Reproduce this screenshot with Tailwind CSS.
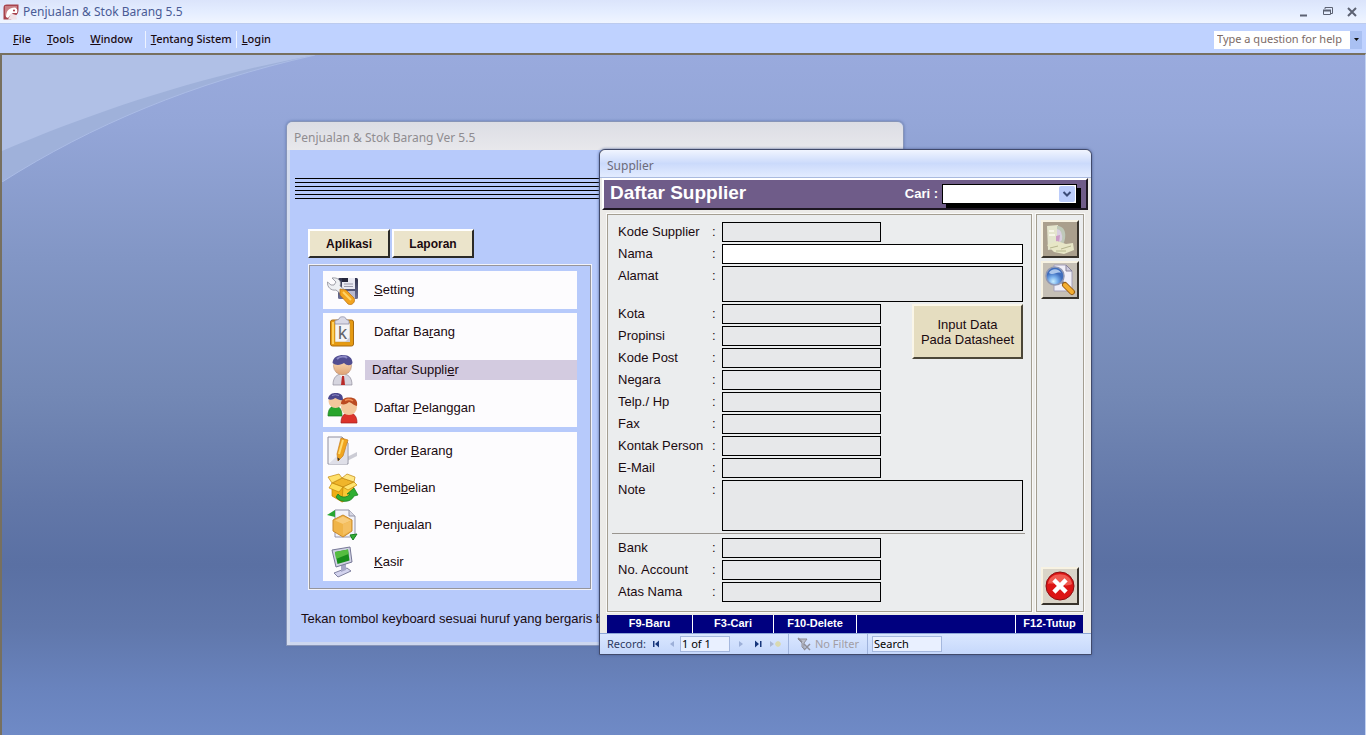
<!DOCTYPE html>
<html lang="id">
<head>
    <meta charset="UTF-8">
    <meta name="viewport" content="width=device-width, initial-scale=1.0">
    <title>Penjualan &amp; Stok Barang 5.5</title>
    <script src="https://cdn.jsdelivr.net/npm/@tailwindcss/browser@4"></script>
</head>
<body class="h-screen flex flex-col overflow-hidden bg-[#bfd2ff] font-['Noto_Sans',sans-serif] text-[#1a0a10]">

    <!-- Title bar -->
    <header class="h-6 shrink-0 flex items-center pl-[3px] pr-2 bg-linear-to-b from-[#dbe4fb] via-[#e4edff] to-[#f0f5ff] border-b border-[#bccbee]">
        <svg class="size-4" viewBox="0 0 16 16">
            <path d="M4 0.5H15.5V6C15.500 9 14 11 12 12L8 15.500H0.5V4C0.5 1.500 1.500 0.500 4 0.500Z" fill="#a8434d"/>
            <path d="M2 2H14V4L6 6 2 13Z" fill="#c98086"/>
            <path d="M3 13C3 7 6 3.500 12 3.500 14 4 15 6 14 9L10 9 8.500 10 7 11.500 5 14Z" fill="#fff"/>
            <circle cx="11" cy="6.500" r="1" fill="#a8343f"/>
            <path d="M8 9.500L5 15.500H14L13 11Z" fill="#f0e2e6"/>
        </svg>
        <h1 class="ml-1 text-[12px] text-[#4a5b95]">Penjualan &amp; Stok Barang 5.5</h1>
        <div class="ml-auto flex items-center gap-3">
            <button aria-label="Minimize" class="size-3">
                <svg class="size-3" viewBox="0 0 12 12"><path d="M2 9.500H9" stroke="#5c6273" stroke-width="2"/></svg>
            </button>
            <button aria-label="Restore" class="size-3">
                <svg class="size-3" viewBox="0 0 12 12" fill="none" stroke="#5c6273"><path d="M3 3V1.500H10.500V7.500H9"/><path d="M1.500 4.500H8.500V8.500H1.500Z"/><path d="M1 4.500H9" stroke-width="2"/></svg>
            </button>
            <button aria-label="Close" class="size-3">
                <svg class="size-3" viewBox="0 0 12 12"><path d="M2 2L10 10M10 2L2 10" stroke="#5c6273" stroke-width="2"/></svg>
            </button>
        </div>
    </header>

    <!-- Menu bar -->
    <nav class="h-[29px] shrink-0 flex items-center pt-0.5 pl-[13px] pr-1 text-[11px] font-medium bg-[#bfd2ff]">
        <button><u>F</u>ile</button>
        <button class="ml-4"><u>T</u>ools</button>
        <button class="ml-4"><u>W</u>indow</button>
        <button class="ml-3 pl-[5px] border-l border-[#eef3ff]"><u>T</u>entang Sistem</button>
        <button class="ml-1 pl-[5px] border-l border-[#eef3ff]"><u>L</u>ogin</button>
        <div class="ml-auto flex h-[18px] w-[148px]">
            <input type="text" aria-label="Help" placeholder="Type a question for help" class="flex-1 min-w-0 bg-white pl-[3px] text-[11px] font-normal placeholder:text-[#7b6a66]">
            <button aria-label="Help list" class="w-3 flex items-center justify-center bg-[#a9c0f2]">
                <svg class="w-[5px] h-[3px]" viewBox="0 0 5 3"><path d="M0 0H5L2.500 3Z" fill="#111"/></svg>
            </button>
        </div>
    </nav>

    <main class="relative flex-1 border-l-2 border-t-2 border-t-[#77705f] border-l-[#77705f] border-r border-r-[#c3d3f3] bg-[linear-gradient(#99aadd_0%,#94a6d8_10%,#8296c5_30%,#7388b5_50%,#6277a8_66%,#5a70a3_75%,#6077ab_84%,#6983bd_93%,#6f8ac6_100%)]">
        <svg class="absolute left-0 top-0 w-[313px] h-[127px]" viewBox="0 0 313 127">
            <path d="M0 0H313C190 28 90 70 0 127Z" fill="#9fb1da"/>
            <path d="M0 0H313C190 23 90 58 0 96Z" fill="#b0c0e6"/>
            <path d="M313 0C190 28 90 70 0 127" fill="none" stroke="#abbce6"/>
        </svg>

        <!-- Main menu window -->
        <section class="absolute left-[284px] top-[66px] w-[618px] pb-[17px] rounded-t-md border border-[#8795b8] bg-[#b7cafb] font-['Liberation_Sans',sans-serif] shadow-[inset_3px_0_0_#d3dcf0,inset_0_-3px_0_#cdd7ef,0_0_3px_#5f76ae]">
            <h2 class="h-7 flex items-center rounded-t-md pl-[7px] pt-1 bg-linear-to-b from-[#dcdde4] to-[#e8e8ec] font-['Noto_Sans',sans-serif] text-[12px] text-[#8f8c90]">Penjualan &amp; Stok Barang Ver 5.5</h2>
            <div class="mx-2 mt-7 flex flex-col gap-[3px]">
                <hr class="border-black"><hr class="border-black"><hr class="border-black"><hr class="border-black"><hr class="border-black"><hr class="border-black">
            </div>
            <div class="mt-[30px] ml-[21px] flex gap-0.5 text-[12px] font-bold">
                <button class="w-[82px] h-[29px] bg-[#ebe4cb] border-2 border-t-white border-l-white border-r-[#2b2a26] border-b-[#2b2a26]">Aplikasi</button>
                <button class="w-[82px] h-[29px] bg-[#ebe4cb] border-2 border-t-white border-l-white border-r-[#2b2a26] border-b-[#2b2a26]">Laporan</button>
            </div>
            <div class="mt-[7px] ml-[22px] w-[282px] px-[13px] pt-[5px] pb-[7px] border border-[#96959b] outline outline-[#f2f3fa] flex flex-col gap-1 text-[13px]">
                <div class="bg-[#fdfcfe]">
                    <button class="w-full h-[38px] flex items-center pl-1 text-left">
                        <svg class="size-8 shrink-0" viewBox="0 0 32 32">
                            <defs><linearGradient id="disk" x2="0" y2="1"><stop stop-color="#30324c"/><stop offset="1" stop-color="#6d7198"/></linearGradient></defs>
                            <rect x="11" y="4" width="20" height="21" rx="1.500" fill="url(#disk)"/>
                            <path d="M15 4H28V15H15Z" fill="#e9e9f3"/><path d="M15 4H21V8H15Z" fill="#25263b"/><path d="M17 12.500H26M17 10H26" stroke="#9999aa"/>
                            <path d="M18 17H28V25H18Z" fill="#b8b9d0"/>
                            <path d="M5 4L9 8 7 11 4 11 0.500 8C0 13 4 17 9 16L15 21 19 17 13 12C15 7 11 3 5 4Z" fill="#eef0f3" stroke="#8a8c96" stroke-width=".8"/>
                            <path d="M13 15L19 16 27 24C29 28 25 32 21 30L13 21Z" fill="#f2a41e" stroke="#b96f10" stroke-width=".7"/><path d="M16 18L24 26" stroke="#ffd368" stroke-width="2"/>
                        </svg>
                        <span class="ml-2.5 flex-1 h-5 leading-5 px-[5px]"><u>S</u>etting</span>
                    </button>
                </div>
                <div class="bg-[#fdfcfe]">
                    <button class="w-full h-[38px] flex items-center pl-1 text-left">
                        <svg class="size-8 shrink-0" viewBox="0 0 32 32">
                            <rect x="3.500" y="4" width="23" height="26" rx="2" fill="#e69a12" stroke="#a76a12"/><path d="M5 6H7V28H5Z" fill="#ffd05b"/>
                            <path d="M8 7H23V26H8Z" fill="#f4f4f6" stroke="#bf8c33" stroke-width=".5"/><path d="M23 26L18 26 23 21Z" fill="#cbcbd4"/>
                            <path d="M8 8V5C8 4 12 4 12 3 12 0 19 0 19 3 19 4 22 4 22 5V8Z" fill="#d9d9e6" stroke="#8f90a6" stroke-width=".8"/>
                            <text x="11" y="23" font-family="Liberation Sans, sans-serif" font-size="18" fill="#65656a">k</text>
                        </svg>
                        <span class="ml-2.5 flex-1 h-5 leading-5 px-[5px]">Daftar Ba<u>r</u>ang</span>
                    </button>
                    <button class="w-full h-[38px] flex items-center pl-1 text-left">
                        <svg class="size-8 shrink-0" viewBox="0 0 32 32">
                            <defs><linearGradient id="skin" x2="0" y2="1"><stop stop-color="#ffe5c5"/><stop offset="1" stop-color="#dda273"/></linearGradient></defs>
                            <path d="M6 31C6 23 10 20 15.500 20S25 23 25 31Z" fill="#d6d5df" stroke="#908e9c" stroke-width=".7"/><path d="M12 20L15.500 24 19 20Z" fill="#fff"/>
                            <path d="M15 22H17L18 31H14Z" fill="#b82a28"/>
                            <ellipse cx="15.500" cy="12" rx="9" ry="9" fill="url(#skin)" stroke="#ab7f62" stroke-width=".5"/>
                            <path d="M5.500 9C6 3 11 1 16 1 22 1 25.500 4 25.500 9 24 12 20 12 17 9 14 11 9 12 5.500 9Z" fill="#514d91"/><path d="M10 5C13 2 18 2 20 4" stroke="#8d89c6" stroke-width="2" fill="none"/>
                        </svg>
                        <span class="ml-1.5 flex-1 h-5 leading-5 pl-[7px] bg-[#d3cbe0]">Daftar Suppli<u>e</u>r</span>
                    </button>
                    <button class="w-full h-[38px] flex items-center pl-1 text-left">
                        <svg class="size-8 shrink-0" viewBox="0 0 32 32">
                            <path d="M1 24C1 17 4 14 8 14S15 17 15 24Z" fill="#28a52c" stroke="#187a20" stroke-width=".7"/>
                            <circle cx="8.500" cy="9" r="7" fill="#f3c79b"/><path d="M1 7C2 2 5 1 9 1 14 1 16 3 16 8 12 9 9 6 8 6 6 8 3 8 1 7Z" fill="#4b478d"/><path d="M5 3.500Q8 2 12 3.500" stroke="#8d89c6" fill="none"/>
                            <path d="M14 31C14 24 17 21 22 21S30 24 30 31Z" fill="#dc332b" stroke="#a11b1a" stroke-width=".7"/>
                            <circle cx="22" cy="15" r="8" fill="#f3c79b"/><path d="M14 12C14 7 18 5.500 22 5.500 28 5.500 31 8 30 14 28 14 25 11 22 10 20 12 17 13 14 12Z" fill="#ba4b22"/><path d="M18 8.500Q22 6 26 9" stroke="#f08d55" stroke-width="1.500" fill="none"/>
                        </svg>
                        <span class="ml-2.5 flex-1 h-5 leading-5 px-[5px]">Daftar <u>P</u>elanggan</span>
                    </button>
                </div>
                <div class="mt-px pb-px bg-[#fdfcfe]">
                    <button class="w-full h-[37px] flex items-center pl-1 text-left">
                        <svg class="size-8 shrink-0" viewBox="0 0 32 32">
                            <path d="M16 24L30 17 30 21 20 26Z" fill="#ccccd5"/>
                            <path d="M1 2H15L21 8V29H1Z" fill="#f4f4f8" stroke="#8f8f9f"/><path d="M1.500 29L20 12V29Z" fill="#dfdfe8"/>
                            <path d="M14 3L21 5 16 21 11 26 10 19Z" fill="#f0a51f" stroke="#c57d1a" stroke-width=".7"/><path d="M16 5L12 19" stroke="#ffdb73" stroke-width="2"/><path d="M11 26L10.500 22.500 13 24Z" fill="#333"/>
                        </svg>
                        <span class="ml-2.5 flex-1 h-5 leading-5 px-[5px]">Order <u>B</u>arang</span>
                    </button>
                    <button class="w-full h-[37px] flex items-center pl-1 text-left">
                        <svg class="size-8 shrink-0" viewBox="0 0 32 32" stroke="#c18509" stroke-width=".7" stroke-linejoin="round">
                            <path d="M5 11L16 15 27 10 26 24 15 30 5 24Z" fill="#edae15"/><path d="M16 15L27 10 26 24 15 30Z" fill="#f7c832"/>
                            <path d="M5 11L15 6 27 10 16 15Z" fill="#f0b52a"/>
                            <path d="M5 11L1 5 12 2 15 6Z" fill="#ffe06a"/><path d="M15 6L20 2 28 5 27 10Z" fill="#ffe685"/>
                            <path d="M5 11L2 16 12 20 16 15Z" fill="#ffdc56"/><path d="M16 15L21 18 30 13 27 10Z" fill="#ffe370"/>
                            <path d="M9 25C13 31 24 31 27 24L31 23 27 16 20 22 23 22C20 26 14 26 11 22Z" fill="#2fae32" stroke="#147a1d"/>
                        </svg>
                        <span class="ml-2.5 flex-1 h-5 leading-5 px-[5px]">Pem<u>b</u>elian</span>
                    </button>
                    <button class="w-full h-[37px] flex items-center pl-1 text-left">
                        <svg class="size-8 shrink-0" viewBox="0 0 32 32">
                            <path d="M8 1H22L28 7V28H8Z" fill="#f3f3f9" stroke="#9293a7"/><path d="M22 1V7H28" fill="#d7d7e4" stroke="#9293a7"/>
                            <path d="M16 6L25 11V22L16 28 6 22V11Z" fill="#f0b448" stroke="#c98a2c"/><path d="M8 11.500L16 7.500 24 11.500 16 15Z" fill="#f8cc7c"/><path d="M16 15V26L24 21.500V12Z" fill="#f4bf61"/>
                            <path d="M0 6L8 1V8Z" fill="#28a532"/><path d="M23 26L30 25 26 31Z" fill="#35ad35" stroke="#168122"/>
                        </svg>
                        <span class="ml-2.5 flex-1 h-5 leading-5 px-[5px]">Penjualan</span>
                    </button>
                    <button class="w-full h-[37px] flex items-center pl-1 text-left">
                        <svg class="size-8 shrink-0" viewBox="0 0 32 32">
                            <path d="M7 27L20 22 24 25 11 31Z" fill="#d3d3ee" stroke="#8182a1"/><path d="M14 19L19 18 19 24 14 26Z" fill="#a7a8c8"/>
                            <path d="M5 4L23 1 25 16 9 21Z" fill="#d0d1e3" stroke="#777897"/>
                            <path d="M8 6L21 3.500 22.500 14.500 10.500 18Z" fill="#178d1b"/><path d="M8 6L21 3.500 21.500 8 9 13Z" fill="#55bd40"/>
                        </svg>
                        <span class="ml-2.5 flex-1 h-5 leading-5 px-[5px]"><u>K</u>asir</span>
                    </button>
                </div>
            </div>
            <p class="mt-[21px] ml-[14px] text-[13px] leading-[18px] whitespace-nowrap">Tekan tombol keyboard sesuai huruf yang bergaris bawah</p>
        </section>

        <!-- Supplier window -->
        <section class="absolute left-[597px] top-[94px] w-[493px] rounded-t-md border border-[#414a6b] bg-[#ecebe8] font-['Liberation_Sans',sans-serif] shadow-[0_0_3px_#4a5f95]">
            <h2 class="h-7 flex items-center rounded-t-md pl-[7px] pt-1 border-b border-[#a9badf] bg-linear-to-b from-[#f1f5ff] via-[#cbdafb] to-[#e3ecff] font-['Noto_Sans',sans-serif] text-[12px] text-[#6c6b79]">Supplier</h2>
            <div class="h-8 ml-0.5 mr-[3px] flex items-center pl-1.5 pr-[9px] bg-[#6f5c89] border-2 border-t-white border-l-white border-r-[#1d1722] border-b-[#1d1722] text-white font-bold">
                <h3 class="text-[19px] leading-6 pb-0.5">Daftar Supplier</h3>
                <label for="cari" class="ml-auto mr-1 text-[13px]">Cari :</label>
                <div class="relative w-[135px] h-5 shadow-[4px_4px_0_#000]">
                    <select id="cari" class="size-full appearance-none bg-white border border-black"></select>
                    <svg class="absolute right-0.5 top-0.5 size-4 pointer-events-none" viewBox="0 0 16 16"><rect width="16" height="16" rx="2" fill="#bccdfb"/><path d="M4.500 6L8 9.500 11.500 6" fill="none" stroke="#3c4c78" stroke-width="2"/></svg>
                </div>
            </div>

            <div class="flex gap-1 mt-1 ml-[7px] mr-[7px]">
                <form class="flex-1 h-[398px] flex flex-col gap-0.5 pt-[7px] pl-1 pr-1.5 border border-[#a49e91] outline outline-white/70 bg-[#ebedee] text-[13px]">
                    <div class="grid grid-cols-[94px_10px_159px_1fr] gap-y-0.5 pl-1.5 pr-0.5 leading-5">
                        <label for="kode">Kode Supplier</label><span>:</span><input id="kode" class="h-5 px-1 border border-black bg-[#e7e8ea]"><span></span>
                        <label for="nama">Nama</label><span>:</span><input id="nama" class="col-span-2 h-5 px-1 border border-black bg-white">
                        <label for="alamat">Alamat</label><span>:</span><textarea id="alamat" class="col-span-2 h-9 px-1 resize-none border border-black bg-[#e7e8ea]"></textarea>
                        <label for="kota">Kota</label><span>:</span><input id="kota" class="h-5 px-1 border border-black bg-[#e7e8ea]">
                        <div class="row-span-3 pl-[31px]"><button type="button" class="w-full h-[55px] leading-[15px] whitespace-nowrap bg-[#e5ddc0] border-2 border-t-[#faf6e8] border-l-[#faf6e8] border-r-[#4b4638] border-b-[#4b4638]">Input Data<br>Pada Datasheet</button></div>
                        <label for="propinsi">Propinsi</label><span>:</span><input id="propinsi" class="h-5 px-1 border border-black bg-[#e7e8ea]">
                        <label for="pos">Kode Post</label><span>:</span><input id="pos" class="h-5 px-1 border border-black bg-[#e7e8ea]">
                        <label for="negara">Negara</label><span>:</span><input id="negara" class="h-5 px-1 border border-black bg-[#e7e8ea]"><span></span>
                        <label for="telp">Telp./ Hp</label><span>:</span><input id="telp" class="h-5 px-1 border border-black bg-[#e7e8ea]"><span></span>
                        <label for="fax">Fax</label><span>:</span><input id="fax" class="h-5 px-1 border border-black bg-[#e7e8ea]"><span></span>
                        <label for="kontak">Kontak Person</label><span>:</span><input id="kontak" class="h-5 px-1 border border-black bg-[#e7e8ea]"><span></span>
                        <label for="email">E-Mail</label><span>:</span><input id="email" class="h-5 px-1 border border-black bg-[#e7e8ea]"><span></span>
                        <label for="note">Note</label><span>:</span><textarea id="note" class="col-span-2 h-[51px] px-1 resize-none border border-black bg-[#e7e8ea]"></textarea>
                    </div>
                    <hr class="border-t border-[#99958f]">
                    <div class="mt-0.5 grid grid-cols-[94px_10px_159px] gap-y-0.5 pl-1.5 leading-5">
                        <label for="bank">Bank</label><span>:</span><input id="bank" class="h-5 px-1 border border-black bg-[#e7e8ea]">
                        <label for="account">No. Account</label><span>:</span><input id="account" class="h-5 px-1 border border-black bg-[#e7e8ea]">
                        <label for="atas">Atas Nama</label><span>:</span><input id="atas" class="h-5 px-1 border border-black bg-[#e7e8ea]">
                    </div>
                </form>
                <div class="w-12 flex flex-col gap-[3px] px-1 pt-[5px] pb-1.5 border border-[#a49e91] outline outline-white/70 bg-[#ebedee]">
                    <button aria-label="Foto" class="size-[38px] p-px bg-[#aa9f8d] border-2 border-t-[#f7f2e2] border-l-[#f7f2e2] border-r-[#38332c] border-b-[#38332c]">
                        <svg class="size-8" viewBox="0 0 32 32">
                            <path d="M3 3L14 2 16 25 4 27Z" fill="#e4e5cd"/><path d="M13 3C22 3 23 13 19 22L13 24Z" fill="#bfc9b9"/>
                            <path d="M13 6Q19 7 18 17L13 22Z" fill="#d9cfe0"/><path d="M12 13L16 12 15 20 12 20Z" fill="#cb9cc6"/>
                            <path d="M3 22L13 18 22 21 29 20 30 27 20 31 10 29Z" fill="#e7e6c6"/><path d="M6 25L14 23M17 26L27 23M12 28L22 28" stroke="#b6b58e"/>
                            <path d="M5 8H10M5 12H11" stroke="#f7f6e8" stroke-width="2"/>
                        </svg>
                    </button>
                    <button aria-label="Cari" class="size-[38px] p-px bg-[#c5bfb5] border-2 border-t-[#f7f2e2] border-l-[#f7f2e2] border-r-[#38332c] border-b-[#38332c]">
                        <svg class="size-8" viewBox="0 0 32 32">
                            <defs><radialGradient id="lens" cx=".4" cy=".8"><stop stop-color="#c9efff"/><stop offset=".5" stop-color="#7ab0ec"/><stop offset="1" stop-color="#3f6dbd"/></radialGradient></defs>
                            <path d="M10 1H22L28 7V27H10Z" fill="#f0eff8" stroke="#a5a0ba"/><path d="M22 1V7H28Z" fill="#cdcbdd" stroke="#88849e"/>
                            <path d="M18 18L22 22" stroke="#77788a" stroke-width="3"/>
                            <path d="M21 21L28 28" stroke="#9b5f13" stroke-width="6" stroke-linecap="round"/><path d="M21 21L28 28" stroke="#f4ae30" stroke-width="4" stroke-linecap="round"/>
                            <circle cx="11" cy="12" r="9" fill="url(#lens)" stroke="#8f97b3" stroke-width="1.500"/><path d="M5 9C7 4 15 4 17 9 13 7 9 12 5 9Z" fill="#dcecff" opacity=".7"/>
                        </svg>
                    </button>
                    <button aria-label="Tutup" class="mt-auto size-[38px] p-px bg-[#d9d4c8] border-2 border-t-[#f7f2e2] border-l-[#f7f2e2] border-r-[#38332c] border-b-[#38332c]">
                        <svg class="size-8" viewBox="0 0 32 32">
                            <circle cx="16" cy="16" r="14" fill="#dc1515" stroke="#8b1113"/><path d="M4 14C5 1 27 1 28 14 22 18 10 12 4 14Z" fill="#f05a50"/>
                            <path d="M11.500 11.500L20.500 20.500M20.500 11.500L11.500 20.500" stroke="#fff" stroke-width="4.500" stroke-linecap="square"/>
                        </svg>
                    </button>
                </div>
            </div>

            <div class="mt-[3px] ml-[7px] mr-2 h-[18px] flex gap-px bg-white text-white text-[11px] font-bold [&>*]:bg-[#00007f] [&>*]:pb-1">
                <button class="w-[85px]">F9-Baru</button>
                <button class="w-20">F3-Cari</button>
                <button class="w-[82px]">F10-Delete</button>
                <span class="flex-1"></span>
                <button class="w-[67px]">F12-Tutup</button>
            </div>

            <!-- Record navigation -->
            <div class="h-[21px] flex items-center pl-[7px] border-t border-[#8ea7d8] bg-linear-to-b from-[#dae7ff] to-[#c6d8fb] font-['Noto_Sans',sans-serif] text-[11px] text-[#2d3a62]">
                <label for="record" class="w-[45px]">Record:</label>
                <button aria-label="First record" class="w-3"><svg class="w-2 h-2" viewBox="0 0 8 8"><path d="M1 1H2.500V7H1ZM7 0.500V7.500L3 4Z" fill="#17377c"/></svg></button>
                <button aria-label="Previous record" class="ml-1 w-3"><svg class="w-2 h-2" viewBox="0 0 8 8"><path d="M6 1V7L2 4Z" fill="#9db0d8"/></svg></button>
                <input id="record" value="1 of 1" class="w-[50px] h-4 pl-px border border-[#a5b8de] bg-[#e9f0ff] text-black">
                <button aria-label="Next record" class="ml-2 w-3"><svg class="w-2 h-2" viewBox="0 0 8 8"><path d="M1 1V7L5 4Z" fill="#9db0d8"/></svg></button>
                <button aria-label="Last record" class="ml-1 w-3"><svg class="w-2 h-2" viewBox="0 0 8 8"><path d="M6 1H7.500V7H6ZM1 0.500V7.500L5 4Z" fill="#17377c"/></svg></button>
                <button aria-label="New record" class="ml-1 w-3"><svg class="w-3 h-2" viewBox="0 0 12 8"><path d="M0 1V7L4 4Z" fill="#a9b7d6"/><path d="M5 4H11M8 1V7M6 2L10 6M10 2L6 6" stroke="#d9d9b0" stroke-width="1.500"/></svg></button>
                <button class="ml-1.5 h-full flex items-center gap-1 px-2 border-x border-[#9fb3dc] text-[#a19da5]">
                    <svg class="size-3.5" viewBox="0 0 14 14" fill="none" stroke="#8f8f99"><path d="M1 2H10L7 6V12L5 10V6Z" fill="#bcbfca"/><path d="M7 7L13 13M13 7L7 13M1 1L5 5" stroke-width="1.500"/></svg>
                    No Filter
                </button>
                <input type="text" aria-label="Search" placeholder="Search" class="ml-1 w-[70px] h-4 pl-px border border-[#a5b8de] bg-[#e9f0ff] placeholder:text-black">
            </div>
        </section>
    </main>
</body>
</html>
